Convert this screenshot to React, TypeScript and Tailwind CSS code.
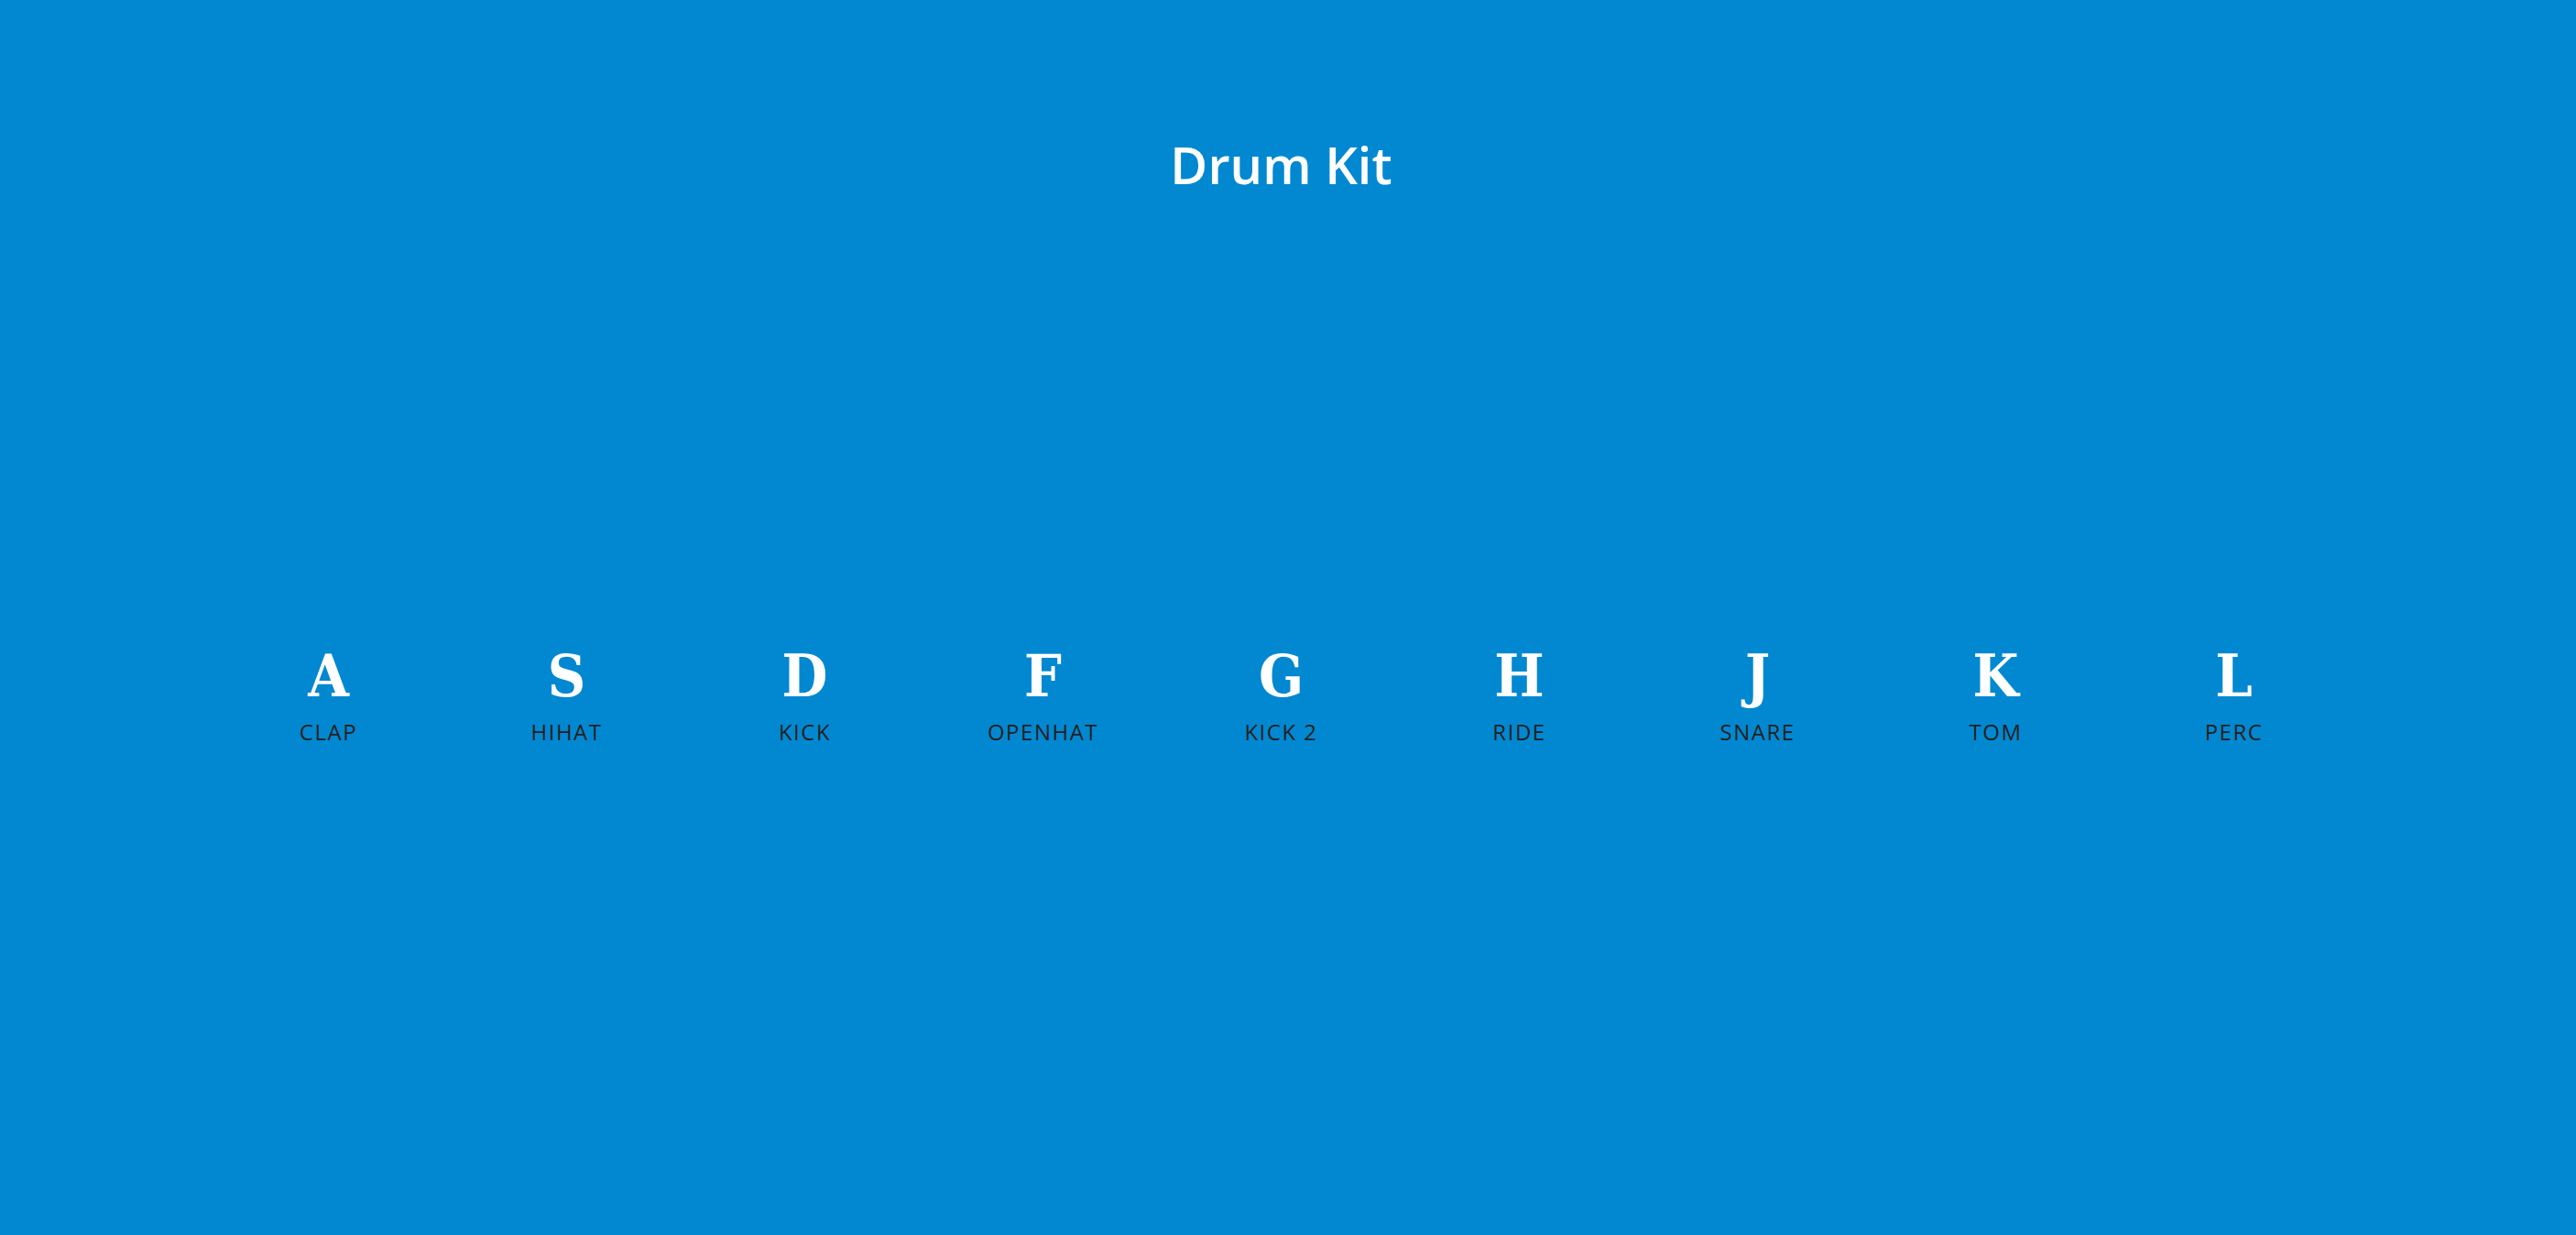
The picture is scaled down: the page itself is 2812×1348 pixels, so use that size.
const keys = [
  { key: 'A', sound: 'clap' },
  { key: 'S', sound: 'hihat' },
  { key: 'D', sound: 'kick' },
  { key: 'F', sound: 'openhat' },
  { key: 'G', sound: 'kick 2' },
  { key: 'H', sound: 'ride' },
  { key: 'J', sound: 'snare' },
  { key: 'K', sound: 'tom' },
  { key: 'L', sound: 'perc' },
];

export default function App() {
  return (
    <div className="min-h-screen w-full bg-[#0288d1] pr-[15px] flex flex-col items-center">
      {/* Header */}
      <h1 className="mt-[151px] text-[56px] leading-none font-semibold text-white font-['Open_Sans',sans-serif]">
        Drum Kit
      </h1>

      {/* Keys */}
      <div className="mt-[499px] flex justify-center">
        {keys.map((k) => (
          <div key={k.key} className="w-[260px] flex flex-col items-center">
            <kbd className="text-[64px] leading-none font-bold text-white font-['DejaVu_Serif_Condensed','DejaVu_Serif',serif]">
              {k.key}
            </kbd>
            <span className="mt-[17px] text-[24px] leading-none font-medium uppercase tracking-[1.5px] text-[#212121] font-['Open_Sans',sans-serif]">
              {k.sound}
            </span>
          </div>
        ))}
      </div>
    </div>
  );
}
